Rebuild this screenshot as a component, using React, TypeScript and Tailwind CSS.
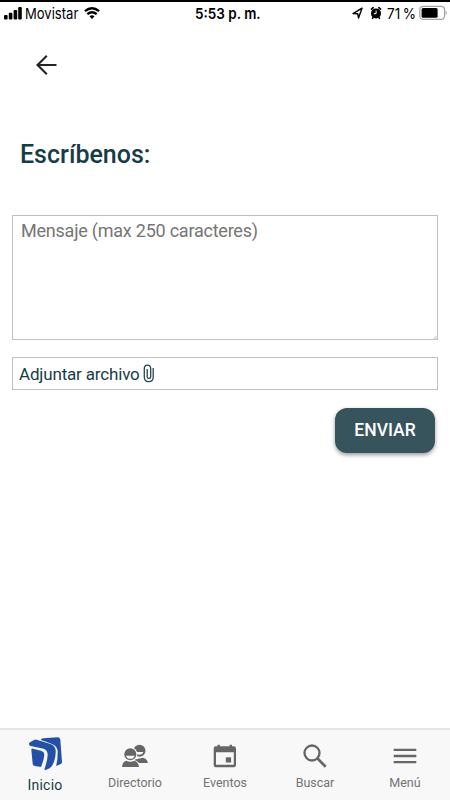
import type { ReactNode } from "react";

function StatusBar() {
  return (
    <header className="flex h-[28px] items-start border-t-2 border-black font-['Inter',sans-serif] text-[15px] leading-[24px] text-black">
      <div className="flex w-[195px] pl-[4px]">
        <svg className="mt-[5px] h-[13px] w-[18px]" viewBox="0 0 18 13">
          <rect x="0" y="8" width="3.6" height="4.5" rx="1" />
          <rect x="4.8" y="5.8" width="3.6" height="6.7" rx="1" />
          <rect x="9.6" y="3" width="3.6" height="9.5" rx="1" />
          <rect x="14.2" y="0" width="3.6" height="12.5" rx="1" />
        </svg>
        <span className="ml-[3px] block w-[59px] origin-left scale-x-[0.87]">Movistar</span>
        <svg className="mt-[4px] h-[14px] w-[16px]" viewBox="0 0 16 14" fill="none" stroke="black" strokeWidth="2.4">
          <path d="M.9 5.2Q8-.9 15.1 5.2M3.3 8.1Q8 4.4 12.7 8.1" />
          <path d="M5.5 10.2Q8 8.4 10.5 10.2L8 13Z" fill="black" stroke="none" />
        </svg>
      </div>
      <span className="w-[90px] origin-left scale-x-[0.9] font-semibold whitespace-nowrap">5:53 p. m.</span>
      <div className="ml-auto flex w-[98px]">
        <svg className="mt-[5px] h-[12px] w-[11px]" viewBox="0 0 11 12" fill="none" stroke="black" strokeWidth="1.4" strokeLinejoin="round">
          <path d="M1 6.6 10 1.2 6.5 11 5.8 6.8Z" />
        </svg>
        <svg className="mt-[4px] ml-[7px] h-[14px] w-[12px]" viewBox="0 0 12 14">
          <circle cx="6" cy="7.4" r="5" />
          <path d="m1.5 3.2 1.7-1.5M10.5 3.2 8.8 1.7M3 11.5l-.5.9M9 11.5l.5.9" stroke="black" strokeWidth="1.6" strokeLinecap="round" />
          <path d="M6.1 4.5v3.2H3.8" fill="none" stroke="white" strokeWidth="1" />
        </svg>
        <span className="ml-[5px] block w-[32px] origin-left scale-x-[0.9] whitespace-nowrap">71<span className="ml-[3px]">%</span></span>
        <svg className="mt-[3px] h-[16px] w-[29px]" viewBox="0 0 29 16">
          <rect x=".8" y="1.3" width="24.8" height="13" rx="3.5" fill="white" stroke="#a5a5a5" strokeWidth="1.3" />
          <rect x="2.6" y="3" width="16" height="9.8" rx="1.5" />
          <path d="M26.8 5.5Q29 7.8 26.8 10.2Z" fill="#a5a5a5" />
        </svg>
      </div>
    </header>
  );
}

function HomeIcon() {
  return (
    <svg className="h-[34px] w-[36px]" viewBox="9 14 108 102" fill="#2451a5">
      <path d="M51 21Q53 18 58 18L101 15Q108 15 109 22L114 89Q114 94 109 96L96 101Q101 84 101 62 102 44 88 37 78 32 52 24Z" />
      <path d="M15 36Q14 33 18 30L30 23Q33 21 38 22L77 34Q94 39 95 54 96 72 90 88 85 103 77 108L65 113Q60 114 62 108 70 87 71 67 71 53 59 49L20 41Q15 40 15 36Z" />
      <path d="M22 52Q22 48 27 49L51 55Q61 58 61 67 60 82 51 104L32 101Q26 100 26 94Z" />
    </svg>
  );
}

function PeopleIcon() {
  return (
    <svg className="h-[24px] w-[28px]" viewBox="0 0 28 24" fill="#666">
      <circle cx="18.5" cy="6.7" r="6" />
      <path d="M14.8 8H22.3Q21.5 10.8 18.5 10.8T14.8 8Z" fill="#f8f8f8" />
      <path d="M14 19V15.5L22 13.8Q26.6 15.2 26.8 19Z" />
      <circle cx="9.3" cy="10.3" r="7.1" fill="#f8f8f8" />
      <path d="M11.5 15.7Q18 17 18.4 20H14Z" fill="#f8f8f8" />
      <circle cx="9.3" cy="10.3" r="6" />
      <path d="M5 11.7H13.6Q13 14.8 9.3 14.8T5 11.7Z" fill="#f8f8f8" />
      <path d="M1 23Q1 18.2 5.2 16.8 9.3 18.8 13.4 16.8 17.8 18.2 18 23Z" />
    </svg>
  );
}

function EventIcon() {
  return (
    <svg className="h-[24px] w-[24px]" viewBox="0 0 24 24" fill="#666">
      <path d="M2.7 2.2H4.5V.8h2.4v1.4h9.7V.8H19v1.4h1.8Q23 2.2 23 4.4V21q0 2.2-2.2 2.2H2.7Q.7 23.2.7 21V4.4Q.7 2.2 2.7 2.2ZM3 8.2v12.5h17.8V8.2Z" />
      <path d="M12.8 13.3h5.3v5.2h-5.3z" />
    </svg>
  );
}

function Tab({ label, icon, active = false }: { label: string; icon: ReactNode; active?: boolean }) {
  return (
    <button className="flex w-[90px] flex-col items-center">
      <span className="flex h-[42px] items-end justify-center">{icon}</span>
      <span className={active ? "mt-[4px] text-[14px] leading-[18px] tracking-[0.25px] text-[#173c48]" : "mt-[2px] text-[12.5px] leading-[18px] text-[#737373]"}>{label}</span>
    </button>
  );
}

export default function App() {
  return (
    <main className="flex h-[800px] w-[450px] flex-col overflow-hidden bg-white font-['Roboto',sans-serif]">
      <StatusBar />
      <button className="mt-[25px] ml-[34px] flex h-[24px] w-[24px] items-center justify-center" aria-label="Regresar">
        <svg className="h-[22px] w-[22px]" viewBox="0 0 22 22" fill="none" stroke="#242424" strokeWidth="2.1">
          <path d="M21.5 11H2.8M11.8 1.7 2.5 11l9.3 9.3" />
        </svg>
      </button>
      <section className="flex flex-1 flex-col px-[12px] pt-[61px]">
        <h1 className="pl-[8px] text-[25px] leading-[34px] font-medium text-[#173c48]">Escríbenos:</h1>
        <textarea className="mt-[43px] block h-[125px] w-[426px] resize-none border border-[#c0c0c0] px-[8px] pt-[4px] text-[18px] leading-[22px] tracking-[-0.23px] outline-none placeholder:text-[#757575]" placeholder="Mensaje (max 250 caracteres)" maxLength={250} />
        <svg className="-mt-[6px] mr-[1px] h-[6px] w-[5px] self-end" viewBox="0 0 5 6" stroke="#aaa" strokeWidth=".8">
          <path d="m1.5 5 3-3M3.5 5 4.5 4" />
        </svg>
        <label className="mt-[17px] flex h-[33px] w-[426px] items-center border border-[#c0c0c0] pt-[3px] pl-[6px] text-[17px] text-[#173c48]">
          <span className="tracking-[-0.17px]">Adjuntar archivo</span>
          <svg className="mb-[4px] ml-[3px] h-[19px] w-[12px]" viewBox="0 0 12 19" fill="none" stroke="#29444d" strokeWidth="1.3">
            <path d="M10.2 4v9.3Q10.2 17.7 5.8 17.7T1.3 13.3V4.8Q1.3 1.2 4.5 1.2T7.7 4.8v7.9Q7.7 14.5 6 14.5T4.2 12.7V5" />
          </svg>
        </label>
        <button className="mt-[17.5px] mr-[3px] h-[45px] w-[100px] self-end rounded-[12px] bg-[#37545d] pt-[1px] text-[17.5px] font-medium text-white shadow-[0_2px_4px_rgba(0,0,0,0.4)]">ENVIAR</button>
      </section>
      <nav className="flex h-[72px] border-t-2 border-[#e5e5e5] bg-[#f8f8f8]">
        <Tab label="Inicio" active icon={<span className="pb-[1px]"><HomeIcon /></span>} />
        <Tab label="Directorio" icon={<span className="pb-[4px]"><PeopleIcon /></span>} />
        <Tab label="Eventos" icon={<span className="pb-[4px]"><EventIcon /></span>} />
        <Tab label="Buscar" icon={
          <svg className="mb-[4px] h-[24px] w-[24px]" viewBox="0 0 24 24" fill="none" stroke="#666" strokeWidth="2.3">
            <circle cx="9" cy="9" r="7.5" /><path d="m14.3 14.3 8.4 8.5" strokeWidth="2.7" />
          </svg>
        } />
        <Tab label="Menú" icon={
          <svg className="mb-[6px] h-[20px] w-[24px]" viewBox="0 0 24 20" fill="none" stroke="#666" strokeWidth="2.3">
            <path d="M.7 3.8h22.6M.7 10h22.6M.7 16.2h22.6" />
          </svg>
        } />
      </nav>
    </main>
  );
}
